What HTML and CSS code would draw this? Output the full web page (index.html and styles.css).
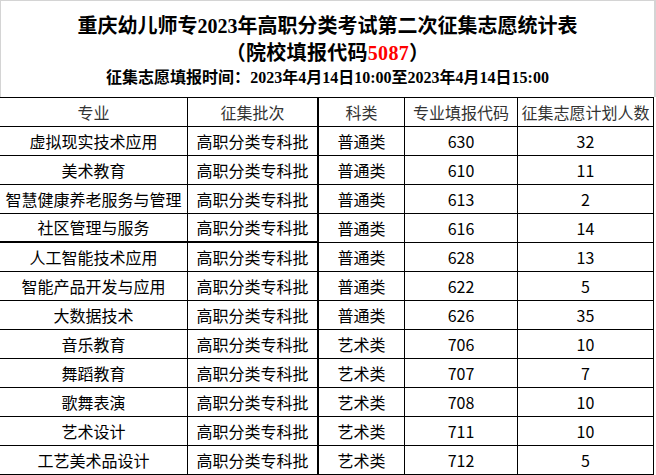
FILE: index.html
```html
<!DOCTYPE html>
<html lang="zh-CN">
<head>
<meta charset="utf-8">
<title>征集志愿统计表</title>
<link rel="stylesheet" href="styles.css">
</head>
<body>
<div class="sheet">
  <div class="title">
    <div class="t1">重庆幼儿师专<span class="num">2023</span>年高职分类考试第二次征集志愿统计表</div>
    <div class="t2">（院校填报代码<span class="num red">5087</span>）</div>
    <div class="t3">征集志愿填报时间：<span class="num">2023</span>年<span class="num">4</span>月<span class="num">14</span>日<span class="num">10:00</span>至<span class="num">2023</span>年<span class="num">4</span>月<span class="num">14</span>日<span class="num">15:00</span></div>
  </div>
  <div class="grid">
    <div class="c h">专业</div><div class="c h c2">征集批次</div><div class="c h">科类</div><div class="c h">专业填报代码</div><div class="c h">征集志愿计划人数</div>

    <div class="c">虚拟现实技术应用</div><div class="c c2">高职分类专科批</div><div class="c">普通类</div><div class="c">630</div><div class="c">32</div>
    <div class="c">美术教育</div><div class="c c2">高职分类专科批</div><div class="c">普通类</div><div class="c">610</div><div class="c">11</div>
    <div class="c">智慧健康养老服务与管理</div><div class="c c2">高职分类专科批</div><div class="c">普通类</div><div class="c">613</div><div class="c">2</div>
    <div class="c thick">社区管理与服务</div><div class="c c2 thick">高职分类专科批</div><div class="c">普通类</div><div class="c">616</div><div class="c">14</div>
    <div class="c">人工智能技术应用</div><div class="c c2">高职分类专科批</div><div class="c">普通类</div><div class="c">628</div><div class="c">13</div>
    <div class="c">智能产品开发与应用</div><div class="c c2">高职分类专科批</div><div class="c">普通类</div><div class="c">622</div><div class="c">5</div>
    <div class="c">大数据技术</div><div class="c c2">高职分类专科批</div><div class="c">普通类</div><div class="c">626</div><div class="c">35</div>
    <div class="c">音乐教育</div><div class="c c2">高职分类专科批</div><div class="c">艺术类</div><div class="c">706</div><div class="c">10</div>
    <div class="c">舞蹈教育</div><div class="c c2">高职分类专科批</div><div class="c">艺术类</div><div class="c">707</div><div class="c">7</div>
    <div class="c">歌舞表演</div><div class="c c2">高职分类专科批</div><div class="c">艺术类</div><div class="c">708</div><div class="c">10</div>
    <div class="c">艺术设计</div><div class="c c2">高职分类专科批</div><div class="c">艺术类</div><div class="c">711</div><div class="c">10</div>
    <div class="c">工艺美术品设计</div><div class="c c2">高职分类专科批</div><div class="c">艺术类</div><div class="c">712</div><div class="c">5</div>
  </div>
</div>
</body>
</html>
```
FILE: styles.css
```css
html, body {
  margin: 0;
  padding: 0;
  background: #ffffff;
}
.sheet {
  width: 656px;
  height: 475px;
  overflow: hidden;
}
.title {
  box-sizing: border-box;
  height: 97px;
  border-top: 1px solid #d4d4d4;
  border-left: 1px solid #d4d4d4;
  border-right: 2px solid #d4d4d4;
  padding-top: 11px;
  text-align: center;
  color: #000;
  font-family: "Noto Sans CJK SC", sans-serif;
  font-weight: 700;
}
.num {
  font-family: "Liberation Serif", serif;
  font-weight: 700;
}
.red {
  color: #ff0000;
}
.t1 {
  font-size: 20px;
  line-height: 26px;
  height: 26px;
}
.t2 {
  font-size: 20px;
  line-height: 27px;
  height: 27px;
  letter-spacing: 0.3px;
}
.t3 {
  font-size: 16px;
  line-height: 23px;
  height: 23px;
}
.grid {
  display: grid;
  grid-template-columns: 188px 131px 86px 113px 136px;
  grid-auto-rows: 29px;
  border-top: 1px solid #000;
  width: 654px;
  font-family: "Noto Sans CJK SC", "Microsoft YaHei", sans-serif;
  font-size: 16px;
  color: #000;
}
.c {
  box-sizing: border-box;
  border-right: 1px solid #000;
  border-bottom: 1px solid #000;
  display: flex;
  align-items: center;
  justify-content: center;
  white-space: nowrap;
  line-height: 1;
  padding-bottom: 1px;
}
.c2 {
  border-right: 2px solid #000;
}
.h {
  color: #333;
}
.thick {
  border-bottom: 2px solid #000;
}
```
